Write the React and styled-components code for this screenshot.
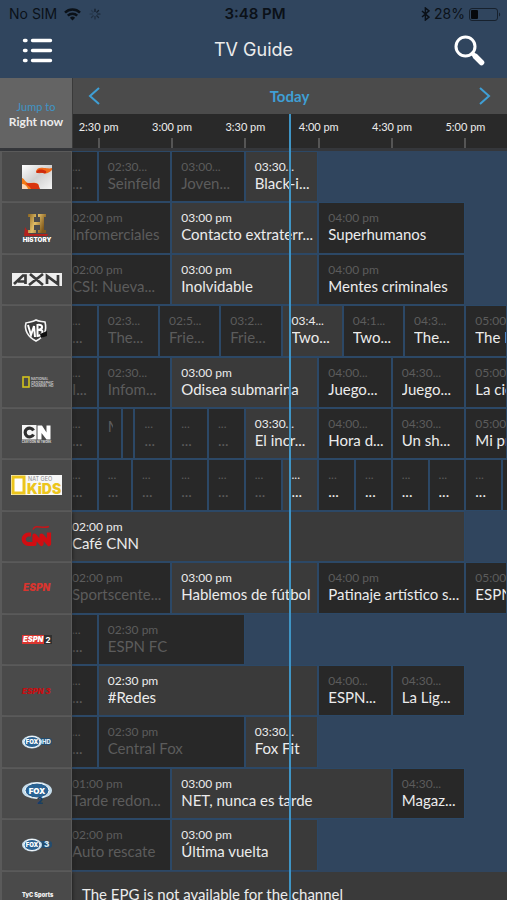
import React from 'react';
import styled, { createGlobalStyle } from 'styled-components';

const GlobalStyle = createGlobalStyle`
  * { box-sizing: border-box; }
  body { margin: 0; background: #30455e; }
  button { border: 0; padding: 0; background: none; font: inherit; color: inherit; cursor: pointer; }
`;

const SIDEBAR = '72px';
// The visible window starts at 2:19:30 pm and is divided into half-minute columns.
const WINDOW_START = 139.5;
const UNITS = 355;
const unit = (clock) => {
  const [h, m] = clock.split(':').map(Number);
  return Math.round((h * 60 + m - WINDOW_START) * 2);
};

const Screen = styled.main`
  height: 100vh;
  overflow: hidden;
  background: #30455e;
  color: #ececec;
  font-family: Lato, 'Open Sans', sans-serif;
`;

const StatusBar = styled.div`
  display: grid;
  grid-template-columns: 1fr auto 1fr;
  align-items: center;
  height: 26px;
  padding: 2px 6px 0 9px;
  color: #0b1118;
  font: 14px/20px Inter, sans-serif;
`;

const StatusGroup = styled.div`
  display: flex;
  align-items: center;
  gap: ${(p) => (p.$end ? '4px' : '7px')};
  justify-content: ${(p) => (p.$end ? 'flex-end' : 'flex-start')};
`;

const Clock = styled.span`
  font-weight: 600;
  font-size: 15px;
`;

const TitleBar = styled.header`
  display: flex;
  align-items: center;
  justify-content: space-between;
  height: 52px;
  padding: 0 22px 4px;
`;

const Title = styled.h1`
  margin: 0;
  font: 400 18px/24px Inter, sans-serif;
`;

const IconButton = styled.button`
  display: flex;
`;

const Guide = styled.section`
  position: relative;
`;

const GuideHead = styled.div`
  display: grid;
  grid-template-columns: ${SIDEBAR} 1fr;
  border-bottom: 3px solid #35373b;
`;

const JumpButton = styled.button`
  display: flex;
  flex-direction: column;
  align-items: center;
  justify-content: center;
  background: #646464;
  font-size: 12px;
  line-height: 15px;
  font-weight: 700;
  padding-top: 2px;
`;

const JumpHint = styled.span`
  color: #3f94c6;
  font-size: 11px;
  font-weight: 400;
`;

const HeadSide = styled.div`
  border-left: 1px solid #3a3a3a;
  margin-right: 0;
`;

const DateBar = styled.div`
  display: flex;
  align-items: center;
  justify-content: space-between;
  height: 36px;
  padding: 0 16px 0 15px;
  background: #4b4b4b;
  color: #3f9fd5;
  font-size: 15px;
  font-weight: 700;
`;

const Ruler = styled.div`
  display: grid;
  grid-template-columns: repeat(${UNITS}, minmax(0, 1fr));
  height: 34px;
  background: #292929;
`;

const Tick = styled.div`
  grid-column: ${(p) => p.$at - 19} / span 40;
  display: flex;
  flex-direction: column;
  align-items: center;
  justify-content: space-between;
  padding-top: 6px;
  font-size: 11px;
  line-height: 14px;
  white-space: nowrap;
  &::after {
    content: '';
    width: 2px;
    height: 10px;
    background: #555;
  }
`;

const Rows = styled.div`
  display: grid;
  grid-template-rows: repeat(15, minmax(51px, 1fr));
  min-height: calc(100vh - 129px);
`;

const Row = styled.div`
  display: grid;
  grid-template-columns: ${SIDEBAR} 1fr;
`;

const Channel = styled.div`
  display: flex;
  align-items: center;
  justify-content: center;
  background: #4a4a4a;
  border: 1px solid #5a5a5a;
  border-width: 1px 1px 1px 2px;
  box-shadow: 3px 0 3px -2px #222;
  z-index: 1;
`;

const Programs = styled.div`
  display: grid;
  grid-template-columns: repeat(${UNITS}, minmax(0, 1fr));
`;

const palette = {
  past: { bg: '#282828', time: '#5c5c5c', title: '#5c5c5c' },
  now: { bg: '#3a3a3a', time: '#ececec', title: '#ececec' },
  next: { bg: '#282828', time: '#5c5c5c', title: '#ececec' },
};

const Program = styled.div`
  grid-column: ${(p) => p.$from + 1} / ${(p) => p.$to + 1};
  margin: 1px 1px 1px ${(p) => (p.$from === 0 ? '0' : '1px')};
  padding: 8px 0 0 ${(p) => (p.$from === 0 ? '0' : '9px')};
  background: ${(p) => palette[p.$state].bg};
  box-shadow: 0 0 0 1px #2c4866;
  overflow: hidden;
  white-space: nowrap;
`;

const Time = styled.div`
  color: ${(p) => palette[p.$state].time};
  font-size: 12px;
  line-height: 14px;
`;

const Name = styled.div`
  color: ${(p) => palette[p.$state].title};
  font-size: 15px;
  line-height: 18px;
  overflow: hidden;
  margin-right: ${(p) => (p.$tight ? '8px' : '0')};
`;

const Notice = styled.p`
  grid-column: 1 / -1;
  display: flex;
  align-items: center;
  margin: 1px 0;
  padding: 0 0 4px 10px;
  background: #3a3a3a;
  font-size: 15px;
`;

const NowLine = styled.div`
  position: absolute;
  top: 36px;
  bottom: 0;
  left: calc(${SIDEBAR} + (100% - ${SIDEBAR}) * ${unit('3:48') / UNITS});
  width: 2px;
  background: #3f94c4;
  z-index: 2;
  pointer-events: none;
`;

/* Icons */

const WifiIcon = () => (
  <svg width="17" height="13" viewBox="0 0 17 13" fill="none" stroke="#0b1118" strokeWidth="2.5">
    <path d="M1 4.6a10.6 10.6 0 0 1 15 0" />
    <path d="M3.8 7.6a6.7 6.7 0 0 1 9.4 0" />
    <path d="M8.5 12.4 5.9 9.8a3.7 3.7 0 0 1 5.2 0z" fill="#0b1118" stroke="none" />
  </svg>
);

const SpinnerIcon = () => (
  <svg width="14" height="14" viewBox="0 0 14 14" stroke="#131c27" strokeWidth="1.2" strokeLinecap="round">
    {[0, 45, 90, 135, 180, 225, 270, 315].map((a) => (
      <path key={a} d="M7 2v2.5" transform={`rotate(${a} 7 7)`} opacity={1 - a / 450} />
    ))}
  </svg>
);

const BluetoothIcon = () => (
  <svg width="9" height="14" viewBox="0 0 9 14" fill="none" stroke="#0b1118" strokeWidth="1.5">
    <path d="M1 4l7 6.2-3.600 2.800V1L8 3.800 1 10" />
  </svg>
);

const BatteryIcon = () => (
  <svg width="32" height="13" viewBox="0 0 32 13">
    <rect x="0.5" y="0.5" width="28" height="12" rx="2.5" fill="none" stroke="#17212d" />
    <rect x="2" y="2" width="7" height="9" rx="1" fill="#05080c" />
    <path d="M30 4.5c1.6.6 1.6 3.4 0 4z" fill="#17212d" />
  </svg>
);

const MenuIcon = () => (
  <svg width="31" height="25" viewBox="0 0 31 25" stroke="#fff" strokeWidth="3.4" strokeLinecap="round">
    <path d="M2.500 2.500h1.500M2.500 12.500h1.500M2.500 22.500h1.500M10.500 2.500h18M10.500 12.500h18M10.500 22.500h18" />
  </svg>
);

const SearchIcon = () => (
  <svg width="31" height="31" viewBox="0 0 31 31" fill="none" stroke="#fff" strokeLinecap="round">
    <circle cx="11.5" cy="11.5" r="9.500" strokeWidth="3" />
    <path d="M18.500 18.500l3 3" strokeWidth="4" />
    <path d="M21.500 21.500l6 6" strokeWidth="5.500" />
  </svg>
);

const Chevron = ({ right }) => (
  <svg width="12" height="18" viewBox="0 0 12 18" fill="none" stroke="#3f9fd5" strokeWidth="2">
    <path d={right ? 'M1 1l9 8-9 8' : 'M11 1L2 9l9 8'} />
  </svg>
);

/* Channel logos */

const Logo = styled.svg`
  display: block;
  overflow: visible;
  font-family: Inter, sans-serif;
`;

const SonyLogo = () => (
  <Logo width="30" height="24" viewBox="0 0 30 24">
    <defs>
      <linearGradient id="sony" x1="0" y1="0" x2="1" y2="1">
        <stop offset="0" stopColor="#fff" />
        <stop offset="0.5" stopColor="#d0d0d0" />
        <stop offset="1" stopColor="#f4f4f4" />
      </linearGradient>
    </defs>
    <rect width="30" height="24" fill="url(#sony)" />
    <path d="M30 3c-3 1-5 0-8 0-4-1-7 0-8 3 0 3 4 2 7 2 3 1 6 0 9-3z" fill="#ef6a1a" />
    <path d="M16 5c3-1 6 0 8 1 1 2-1 3-3 2-3-1-6 1-7-1z" fill="#cf2c10" />
    <path d="M0 13c2 0 3 4 6 5 4 0 7-1 10 1 1 2 1 3 1 5H0z" fill="#f47b16" />
    <path d="M4 18c4 1 8-1 12 1l2 5H9c-1-3-4-3-5-6z" fill="#d93510" />
    <path d="M0 19c3 0 5 2 6 5H0z" fill="#fbd9b8" />
  </Logo>
);

const HistoryLogo = () => (
  <Logo width="30" height="28" viewBox="0 0 30 28">
    <defs>
      <linearGradient id="gold" x1="0" y1="0" x2="1" y2="0.4">
        <stop offset="0" stopColor="#8a6420" />
        <stop offset="0.5" stopColor="#e0bd67" />
        <stop offset="1" stopColor="#80591c" />
      </linearGradient>
    </defs>
    <path d="M3 13l2 3 2 0v4h19l-1 2H2z" fill="#b3231e" />
    <path d="M6 0h8v3h-2v5h6V3h-2V0h8v3h-2v13h2v3h-8v-3h2v-5h-6v5h2v3H6v-3h2V3H6z" fill="url(#gold)" />
    <text x="15" y="27.5" textAnchor="middle" fontSize="6.300" fontWeight="900" fill="#fff">HISTORY</text>
  </Logo>
);

const AxnLogo = () => (
  <Logo width="50" height="13" viewBox="0 0 50 13">
    <rect width="50" height="13" fill="#eee" />
    <path d="M2 11L11 2.500h2.500V11M6 8.500h7M18 1l13 11M31 1L17 12M35 11V3l11 8V2" fill="none" stroke="#3b3b3b" strokeWidth="2.700" />
  </Logo>
);

const WbLogo = () => (
  <Logo width="26" height="24" viewBox="0 0 26 24">
    <path d="M12 1c3 2 6 1 9 2 2 8-1 15-9 19C4 18 0 11 2 4c4-1 7-1 10-3z" fill="#3a3a3a" stroke="#f4f4f4" strokeWidth="1.6" />
    <path d="M4 6l3 10 3-9 1 11M13.500 5v13M13.500 6c6-1 6 4 1 5 6-1 5 5-1 6" fill="none" stroke="#fff" strokeWidth="2" />
    <path d="M16 15l7-3v5l-6 2z" fill="#101010" />
  </Logo>
);

const NatGeoLogo = () => (
  <Logo width="30" height="12" viewBox="0 0 30 12">
    <rect x="1" y="1" width="6" height="10" fill="none" stroke="#d2c21c" strokeWidth="1.6" />
    <text x="9" y="4" fontSize="3.400" fontWeight="600" fill="#ccc">NATIONAL</text>
    <text x="9" y="7.700" fontSize="3.400" fontWeight="600" fill="#ccc">GEOGRAPHIC</text>
    <text x="9" y="11.300" fontSize="3.400" fontWeight="600" fill="#ccc">CHANNEL HD</text>
  </Logo>
);

const CnLogo = () => (
  <Logo width="29" height="18" viewBox="0 0 29 18">
    <rect width="14.500" height="14.500" fill="#f5f5f5" />
    <path d="M11.500 5.500A4.400 4.400 0 1 0 11.500 9.500" fill="none" stroke="#303030" strokeWidth="3.200" />
    <path d="M15.500 14.500V0.500h4.500l4.500 7V0.500H28.500v14h-4L19.500 8v6.500z" fill="#fff" />
    <text x="14.500" y="17.500" textAnchor="middle" fontSize="2.800" fontWeight="700" fill="#ddd">CARTOON NETWORK</text>
  </Logo>
);

const KidsLogo = () => (
  <Logo width="51" height="20" viewBox="0 0 51 20">
    <rect width="51" height="20" fill="#f7f7f7" />
    <rect x="2" y="2" width="11" height="16" fill="#fff" stroke="#ecc51c" strokeWidth="3" />
    <text x="17" y="5.500" fontSize="5.500" fill="#888">NAT GEO</text>
    <text x="16" y="18.500" fontSize="14" fontWeight="900" fill="#ecc51c">KiDS</text>
  </Logo>
);

const CnnLogo = () => (
  <Logo width="30" height="22" viewBox="0 0 30 22">
    <path d="M11 4.500c3-6 8 0 16-3" fill="none" stroke="#c5161a" strokeWidth="1.500" />
    <path d="M9 9.500H6.500a4.500 4.500 0 0 0 0 9.500h6V10.500l7 8.500v-8.500l7.500 8.500V7.500" fill="none" stroke="#d10d12" strokeWidth="4.200" strokeLinejoin="round" />
  </Logo>
);

const EspnMark = ({ color, suffix }) => (
  <Logo width="30" height="8" viewBox="0 0 30 8">
    <text x={suffix ? 0 : 1} y="7" fontSize={suffix ? 8 : 10} fontWeight="900" fontStyle="italic" fill={color}>
      {suffix ? 'ESPN 3' : 'ESPN'}
    </text>
  </Logo>
);

const Espn2Logo = () => (
  <Logo width="30" height="9" viewBox="0 0 30 9">
    <rect width="22" height="9" fill="#dc3630" />
    <text x="1" y="7.300" fontSize="7.500" fontWeight="900" fontStyle="italic" fill="#fff">ESPN</text>
    <rect x="22" width="8" height="9" fill="#303030" />
    <text x="23.500" y="7.500" fontSize="8" fontWeight="700" fill="#fff">2</text>
  </Logo>
);

const FoxLogo = ({ variant }) => {
  const big = variant === '2';
  const cx = big ? 15 : 10;
  const cy = big ? 8.5 : 7;
  return (
    <Logo width="30" height={big ? 22 : 14} viewBox={big ? '0 0 30 22' : '0 0 30 14'}>
      {!big && <rect x="14" y="3" width="16" height="7" rx="3" fill="#234c6e" />}
      <ellipse cx={cx} cy={cy} rx={big ? 15 : 10} ry={big ? 8.5 : 6.5} fill="#c5dcea" />
      <ellipse cx={cx} cy={cy} rx={big ? 12 : 8} ry={big ? 7.5 : 5.5} fill="#2a6292" stroke="#fff" />
      <text x={cx} y={big ? 11.5 : 9} textAnchor="middle" fontSize={big ? 8 : 6} fontWeight="900" fill="#fff">FOX</text>
      {big && <text x="15" y="21.5" fontSize="9" fontWeight="900" fill="#173e66">2</text>}
      {!big && <text x={variant === '3' ? 22 : 20} y="9" fontSize={variant === '3' ? 8 : 6} fontWeight="900" fill="#d8e8f3">{variant}</text>}
    </Logo>
  );
};

const TycLogo = () => (
  <Logo width="30" height="8" viewBox="0 0 30 8">
    <text x="0" y="4.500" fontSize="5.600" fontWeight="900" fill="#f2f2f2">TyC Sports</text>
  </Logo>
);

/* [from, to, time, title, state] */
const START = '2:19.5';
const END = '5:17';
const before = (title = '...') => [START, '2:30', '...', title, 'past'];

const channels = [
  { logo: <SonyLogo />, programs: [
    before(),
    ['2:30', '3:00', '02:30...', 'Seinfeld', 'past'],
    ['3:00', '3:30', '03:00...', 'Joven...', 'past'],
    ['3:30', '4:00', '03:30...', 'Black-i...', 'now'],
  ] },
  { logo: <HistoryLogo />, programs: [
    [START, '3:00', '02:00 pm', 'Infomerciales', 'past'],
    ['3:00', '4:00', '03:00 pm', 'Contacto extraterr...', 'now'],
    ['4:00', '5:00', '04:00 pm', 'Superhumanos', 'next'],
  ] },
  { logo: <AxnLogo />, programs: [
    [START, '3:00', '02:00 pm', 'CSI: Nueva...', 'past'],
    ['3:00', '4:00', '03:00 pm', 'Inolvidable', 'now'],
    ['4:00', '5:00', '04:00 pm', 'Mentes criminales', 'next'],
  ] },
  { logo: <WbLogo />, programs: [
    before(),
    ['2:30', '2:55', '02:3...', 'The...', 'past'],
    ['2:55', '3:20', '02:5...', 'Frie...', 'past'],
    ['3:20', '3:45', '03:2...', 'Frie...', 'past'],
    ['3:45', '4:10', '03:4...', 'Two...', 'now'],
    ['4:10', '4:35', '04:1...', 'Two...', 'next'],
    ['4:35', '5:00', '04:3...', 'The...', 'next'],
    ['5:00', END, '05:00 pm', 'The Big', 'next'],
  ] },
  { logo: <NatGeoLogo />, programs: [
    before('I...'),
    ['2:30', '3:00', '02:30...', 'Infom...', 'past'],
    ['3:00', '4:00', '03:00 pm', 'Odisea submarina', 'now'],
    ['4:00', '4:30', '04:00...', 'Juego...', 'next'],
    ['4:30', '5:00', '04:30...', 'Juego...', 'next'],
    ['5:00', END, '05:00 pm', 'La ciencia', 'next'],
  ] },
  { logo: <CnLogo />, programs: [
    before(),
    ['2:30', '2:40', '', 'M', 'past'],
    ['2:40', '2:45', '', '', 'past'],
    ['2:45', '3:00', '...', '...', 'past'],
    ['3:00', '3:15', '...', '...', 'past'],
    ['3:15', '3:30', '...', '...', 'past'],
    ['3:30', '4:00', '03:30...', 'El incr...', 'now'],
    ['4:00', '4:30', '04:00...', 'Hora d...', 'next'],
    ['4:30', '5:00', '04:30...', 'Un sh...', 'next'],
    ['5:00', END, '05:00 pm', 'Mi primera', 'next'],
  ] },
  { logo: <KidsLogo />, programs: [
    before(),
    ['2:30', '2:44', '...', '...', 'past'],
    ['2:44', '3:00', '...', '...', 'past'],
    ['3:00', '3:15', '...', '...', 'past'],
    ['3:15', '3:30', '...', '...', 'past'],
    ['3:30', '3:45', '...', '...', 'past'],
    ['3:45', '4:00', '...', '...', 'now'],
    ['4:00', '4:15', '...', '...', 'next'],
    ['4:15', '4:30', '...', '...', 'next'],
    ['4:30', '4:45', '...', '...', 'next'],
    ['4:45', '5:00', '...', '...', 'next'],
    ['5:00', '5:15', '...', '...', 'next'],
    ['5:15', END, '', '', 'next'],
  ] },
  { logo: <CnnLogo />, programs: [
    [START, '5:00', '02:00 pm', 'Café CNN', 'now'],
  ] },
  { logo: <EspnMark color="#d8352f" />, programs: [
    [START, '3:00', '02:00 pm', 'Sportscente...', 'past'],
    ['3:00', '4:00', '03:00 pm', 'Hablemos de fútbol', 'now'],
    ['4:00', '5:00', '04:00 pm', 'Patinaje artístico s...', 'next'],
    ['5:00', END, '05:00 pm', 'ESPN', 'next'],
  ] },
  { logo: <Espn2Logo />, programs: [
    before(),
    ['2:30', '3:30', '02:30 pm', 'ESPN FC', 'past'],
  ] },
  { logo: <EspnMark color="#c50f12" suffix />, programs: [
    before(),
    ['2:30', '4:00', '02:30 pm', '#Redes', 'now'],
    ['4:00', '4:30', '04:00...', 'ESPN...', 'next'],
    ['4:30', '5:00', '04:30...', 'La Lig...', 'next'],
  ] },
  { logo: <FoxLogo variant="HD" />, programs: [
    before(),
    ['2:30', '3:30', '02:30 pm', 'Central Fox', 'past'],
    ['3:30', '4:00', '03:30...', 'Fox Fit', 'now'],
  ] },
  { logo: <FoxLogo variant="2" />, programs: [
    [START, '3:00', '01:00 pm', 'Tarde redon...', 'past'],
    ['3:00', '4:30', '03:00 pm', 'NET, nunca es tarde', 'now'],
    ['4:30', '5:00', '04:30...', 'Magaz...', 'next'],
  ] },
  { logo: <FoxLogo variant="3" />, programs: [
    [START, '3:00', '02:00 pm', 'Auto rescate', 'past'],
    ['3:00', '4:00', '03:00 pm', 'Última vuelta', 'now'],
  ] },
  { logo: <TycLogo />, notice: 'The EPG is not available for the channel' },
];

const ticks = ['2:30', '3:00', '3:30', '4:00', '4:30', '5:00'];

export default function App() {
  return (
    <Screen>
      <GlobalStyle />
      <StatusBar>
        <StatusGroup>
          <span>No SIM</span>
          <WifiIcon />
          <SpinnerIcon />
        </StatusGroup>
        <Clock>3:48 PM</Clock>
        <StatusGroup $end>
          <BluetoothIcon />
          <span>28%</span>
          <BatteryIcon />
        </StatusGroup>
      </StatusBar>
      <TitleBar>
        <IconButton aria-label="Menu"><MenuIcon /></IconButton>
        <Title>TV Guide</Title>
        <IconButton aria-label="Search"><SearchIcon /></IconButton>
      </TitleBar>
      <Guide>
        <GuideHead>
          <JumpButton>
            <JumpHint>Jump to</JumpHint>
            Right now
          </JumpButton>
          <HeadSide>
            <DateBar>
              <IconButton aria-label="Previous day"><Chevron /></IconButton>
              <span>Today</span>
              <IconButton aria-label="Next day"><Chevron right /></IconButton>
            </DateBar>
            <Ruler>
              {ticks.map((t) => (
                <Tick key={t} $at={unit(t)}>{t} pm</Tick>
              ))}
            </Ruler>
          </HeadSide>
        </GuideHead>
        <Rows>
          {channels.map((channel, i) => (
            <Row key={i}>
              <Channel>{channel.logo}</Channel>
              <Programs>
                {channel.notice && <Notice>{channel.notice}</Notice>}
                {channel.programs?.map(([from, to, time, title, state]) => (
                  <Program key={from} $from={unit(from)} $to={unit(to)} $state={state}>
                    <Time $state={state}>{time}</Time>
                    <Name $state={state} $tight={title.length === 1}>{title}</Name>
                  </Program>
                ))}
              </Programs>
            </Row>
          ))}
        </Rows>
        <NowLine />
      </Guide>
    </Screen>
  );
}
